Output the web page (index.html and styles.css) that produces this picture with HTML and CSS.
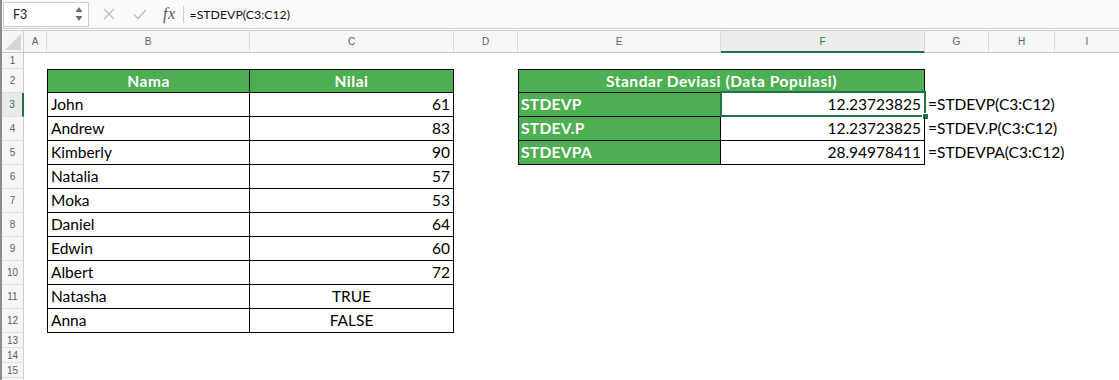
FILE: index.html
```html
<!DOCTYPE html>
<html>
<head>
<meta charset="utf-8">
<link rel="stylesheet" href="styles.css">
</head>
<body>
<div class="app">
  <div class="fbar">
    <div class="namebox">
      <span class="ref">F3</span>
      <span class="spin">
        <svg width="8" height="16" viewBox="0 0 8 16"><path d="M4 1 L7.5 6 L0.5 6 Z" fill="#6e6e6e"/><path d="M4 15 L7.5 10 L0.5 10 Z" fill="#6e6e6e"/></svg>
      </span>
    </div>
    <div class="tools">
      <svg class="tool-x" width="12" height="12" viewBox="0 0 12 12"><path d="M1 1 L11 11 M11 1 L1 11" stroke="#bdbdbd" stroke-width="1.3" fill="none"/></svg>
      <svg class="tool-check" width="14" height="11" viewBox="0 0 14 11"><path d="M1 5.5 L5 9.5 L13 1" stroke="#bdbdbd" stroke-width="1.3" fill="none"/></svg>
      <span class="fx">fx</span>
    </div>
    <div class="fsep"></div>
    <div class="formula">=STDEVP(C3:C12)</div>
  </div>

  <div class="sheet">
    <div class="corner"><svg width="16" height="16" viewBox="0 0 16 16"><path d="M16 0 L16 16 L0 16 Z" fill="#d6d6d6"/></svg></div>
    <div class="ch">A</div>
    <div class="ch">B</div>
    <div class="ch">C</div>
    <div class="ch">D</div>
    <div class="ch">E</div>
    <div class="ch ch-sel">F</div>
    <div class="ch">G</div>
    <div class="ch">H</div>
    <div class="ch ch-last">I</div>

    <div class="rh r1">1</div>
    <div class="rh">2</div>
    <div class="rh rh-sel">3</div>
    <div class="rh">4</div>
    <div class="rh">5</div>
    <div class="rh">6</div>
    <div class="rh">7</div>
    <div class="rh">8</div>
    <div class="rh">9</div>
    <div class="rh">10</div>
    <div class="rh">11</div>
    <div class="rh">12</div>
    <div class="rh rh-sm">13</div>
    <div class="rh rh-sm">14</div>
    <div class="rh rh-sm">15</div>
    <div class="rh rh-sm"></div>

    <div class="t1">
      <div class="c hd first-col">Nama</div>
      <div class="c hd">Nilai</div>
      <div class="c first-col">John</div><div class="c num">61</div>
      <div class="c first-col">Andrew</div><div class="c num">83</div>
      <div class="c first-col">Kimberly</div><div class="c num">90</div>
      <div class="c first-col">Natalia</div><div class="c num">57</div>
      <div class="c first-col">Moka</div><div class="c num">53</div>
      <div class="c first-col">Daniel</div><div class="c num">64</div>
      <div class="c first-col">Edwin</div><div class="c num">60</div>
      <div class="c first-col">Albert</div><div class="c num">72</div>
      <div class="c first-col">Natasha</div><div class="c ctr">TRUE</div>
      <div class="c first-col">Anna</div><div class="c ctr">FALSE</div>
    </div>

    <div class="t2">
      <div class="c hd first-col span2">Standar Deviasi (Data Populasi)</div>
      <div class="free"></div>
      <div class="c lab first-col">STDEVP</div><div class="c num sel">12.23723825</div><div class="free fm">=STDEVP(C3:C12)</div>
      <div class="c lab first-col">STDEV.P</div><div class="c num">12.23723825</div><div class="free fm">=STDEV.P(C3:C12)</div>
      <div class="c lab first-col">STDEVPA</div><div class="c num">28.94978411</div><div class="free fm">=STDEVPA(C3:C12)</div>
    </div>
  </div>
</div>
</body>
</html>
```

FILE: styles.css
```css
html, body {
  margin: 0;
  padding: 0;
  background: #ffffff;
  overflow: hidden;
}
.app {
  width: 1119px;
  height: 380px;
  overflow: hidden;
  box-sizing: border-box;
  border-left: 2px solid #8c8c8c;
  font-family: "Lato", "Liberation Sans", sans-serif;
}

/* formula bar */
.fbar {
  height: 28px;
  border-bottom: 1px solid #cfcfcf;
  margin-bottom: 1px;
  background: #fafafa;
  display: flex;
  align-items: center;
  box-sizing: content-box;
}
.namebox {
  box-sizing: border-box;
  width: 86px;
  height: 25px;
  margin-left: 1px;
  border: 1px solid #cdcdcd;
  background: #ffffff;
  display: flex;
  align-items: center;
  justify-content: space-between;
  padding: 0 5px 0 9px;
}
.ref {
  font-size: 12.5px;
  color: #222;
}
.spin {
  display: flex;
  align-items: center;
}
.tools {
  display: flex;
  align-items: center;
  height: 25px;
  padding-left: 14px;
}
.tool-x { margin-right: 18px; }
.tool-check { margin-right: 16px; }
.fx {
  font-family: "Liberation Serif", "DejaVu Serif", serif;
  font-style: italic;
  font-size: 16px;
  color: #555;
  letter-spacing: 0.5px;
}
.fsep {
  width: 1px;
  height: 17px;
  background: #d0d0d0;
  margin-left: 7px;
}
.formula {
  padding-left: 6px;
  font-size: 12.3px;
  color: #111;
}

/* sheet */
.sheet {
  display: grid;
  grid-template-columns: 22px 23px 203px 204px 64px 203px 204px 64px 66px 1fr;
  grid-template-rows: 23px 16px repeat(11, 24px) repeat(4, 15px);
}
.corner, .ch {
  background: #f6f6f6;
  border-top: 1px solid #cbcbcb;
  border-bottom: 1px solid #c6c6c6;
  box-sizing: border-box;
}
.corner {
  border-right: 1px solid #d0d0d0;
  display: flex;
  align-items: flex-end;
  justify-content: flex-end;
  padding: 0 2px 2px 0;
}
.ch {
  border-right: 1px solid #dadada;
  display: flex;
  align-items: center;
  justify-content: center;
  font-family: "Liberation Sans", sans-serif;
  font-size: 10px;
  color: #606060;
}
.ch-last { border-right: none; }
.ch-sel {
  background: #eceeec;
  color: #217346;
  border-bottom: 2px solid #217346;
}
.rh {
  grid-column: 1;
  background: #f6f6f6;
  border-right: 1px solid #cfcfcf;
  border-bottom: 1px solid #e0e0e0;
  box-sizing: border-box;
  display: flex;
  align-items: center;
  justify-content: center;
  font-family: "Liberation Sans", sans-serif;
  font-size: 10px;
  color: #606060;
}
.rh-sm { padding-top: 1px; }
.rh-sel {
  background: #eaeaea;
  color: #217346;
  border-right: 2px solid #217346;
}

/* tables */
.t1 {
  grid-column: 3 / 5;
  grid-row: 3 / 14;
  display: grid;
  grid-template-columns: 203px 204px;
  grid-template-rows: repeat(11, 24px);
}
.t2 {
  grid-column: 6 / 11;
  grid-row: 3 / 7;
  display: grid;
  grid-template-columns: 203px 204px 1fr;
  grid-template-rows: repeat(4, 24px);
}
.c {
  box-sizing: border-box;
  border-right: 1px solid #000;
  border-bottom: 1px solid #000;
  font-size: 15.5px;
  line-height: 23px;
  color: #000;
  padding: 0 3px;
  white-space: nowrap;
  overflow: hidden;
  position: relative;
}
.first-col { border-left: 1px solid #000; }
.hd {
  border-top: 1px solid #000;
  line-height: 22px;
  background: #4eae52;
  color: #fff;
  font-weight: 700;
  text-align: center;
  letter-spacing: 0.55px;
}
.span2 { grid-column: 1 / 3; }
.lab {
  background: #4eae52;
  color: #fff;
  font-weight: 700;
  padding-left: 2px;
  letter-spacing: 0.3px;
}
.num { text-align: right; }
.ctr { text-align: center; }
.free {
  font-size: 15.5px;
  line-height: 23px;
  white-space: nowrap;
  padding-left: 3px;
}
.sel {
  overflow: visible;
}
.sel::before {
  content: "";
  position: absolute;
  left: -1px;
  top: -2px;
  right: -2px;
  bottom: -1px;
  border: 2px solid #217346;
  pointer-events: none;
}
.sel::after {
  content: "";
  position: absolute;
  right: -5px;
  bottom: -4px;
  width: 5px;
  height: 5px;
  background: #217346;
  border: 1px solid #fff;
}
```
